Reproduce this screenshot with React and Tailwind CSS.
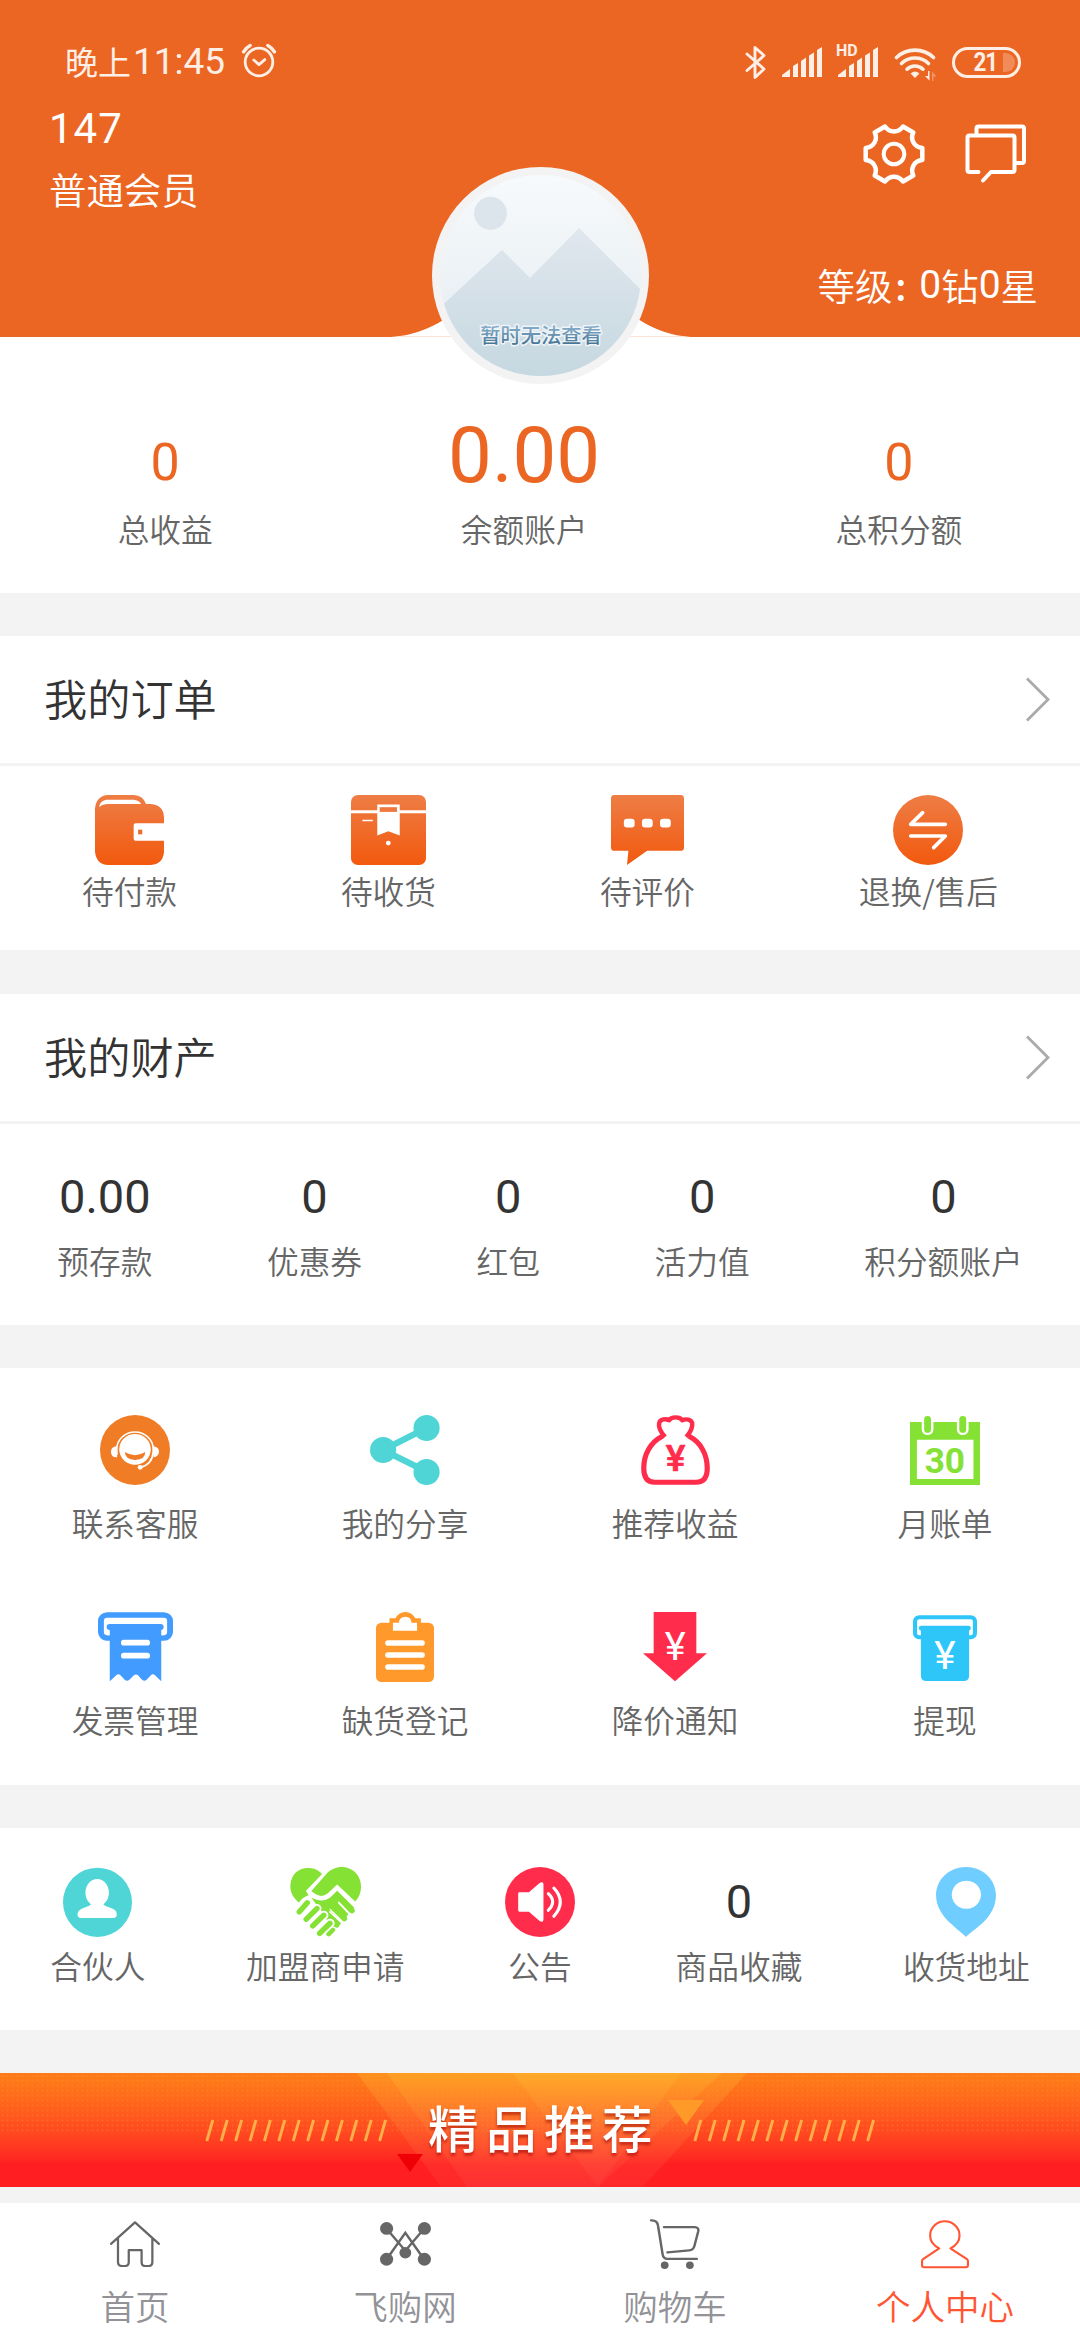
import React from "react";

const CREAM = "#fdeee6";

const Svg = ({ w, h, vb, children }) => (
  <svg width={w} height={h} viewBox={vb} preserveAspectRatio="none" fill="none" className="block shrink-0">
    {children}
  </svg>
);

// Status bar
const AlarmIcon = () => (
  <Svg w={36} h={36} vb="0 0 36 36">
    <g stroke={CREAM} strokeWidth="2.8" strokeLinecap="round" strokeLinejoin="round">
      <circle cx="18" cy="20" r="13.8" />
      <path d="M12.8 18l5.2 4.6 5.8-5" />
      <path strokeWidth="3.4" d="M2.6 9.8Q5 5.5 9.2 3.4M33.4 9.8Q31 5.5 26.8 3.4" />
    </g>
  </Svg>
);

const BluetoothIcon = () => (
  <Svg w={22} h={35} vb="0 0 22 35">
    <path
      d="M2 9l17 15-9 8.500V2.500L19 10.500 2 25.500"
      stroke={CREAM}
      strokeWidth="2.9"
      strokeLinecap="round"
      strokeLinejoin="round"
    />
  </Svg>
);

const SignalIcon = () => (
  <Svg w={41} h={30} vb="0 0 41 30">
    <g fill={CREAM}>
      <path d="M0 30v-2l8-6v8z" />
      <path d="M11 30V19l5-3v14z" />
      <path d="M19 30V14l5-3.500V30z" />
      <path d="M27 30V8.500L32 5.500V30z" />
      <path d="M35 30V3l5-3v30z" />
    </g>
  </Svg>
);

const WifiIcon = () => (
  <Svg w={43} h={34} vb="0 0 43 34">
    <g stroke={CREAM} strokeWidth="3.6" strokeLinecap="round">
      <path d="M2.500 10.500a27 27 0 0 1 37 0" />
      <path d="M7.500 16.500a19.500 19.500 0 0 1 27 0" />
      <path d="M13 22.200a11.500 11.500 0 0 1 16 0" />
    </g>
    <path d="M21 31l-4.400-4.500q4.400-3.800 8.800 0z" fill={CREAM} />
    <path d="M35.500 24v9.500l-4.500-4.500h3v-5z" fill={CREAM} />
    <path d="M38 34v-9.500l4.500 5H39.500V34z" fill={CREAM} opacity=".35" />
  </Svg>
);

const Battery = () => (
  <div className="flex h-[31px] w-[69px] items-center justify-end rounded-full border-3 border-[#fdeee6] pr-[3px]">
    <span className="mr-[6px] origin-right scale-x-90 font-[Roboto] text-[25px] leading-none font-bold tracking-[-1.5px] text-[#fdeee6]">
      21
    </span>
    <span className="h-[19px] w-[12px] rounded-r-full bg-[#f18c5a]" />
  </div>
);

// Header
const GearIcon = () => (
  <Svg w={64} h={62} vb="-32 -31 64 62">
    <g stroke="#fff" strokeWidth="4.5" strokeLinejoin="round">
      <path d="M-9-27.500C-4.500-21 4.500-21 9-27.500L19.300-21.500C15.900-14.400 20.400-6.600 28.300-5.950V5.950C20.400 6.600 15.900 14.400 19.300 21.500L9 27.500C4.500 21-4.500 21-9 27.500L-19.300 21.500C-15.900 14.400-20.400 6.600-28.300 5.950V-5.950C-20.400-6.600-15.900-14.400-19.300-21.500Z" />
      <circle r="10.3" strokeWidth="4" />
    </g>
  </Svg>
);

const ChatIcon = () => (
  <Svg w={62} h={60} vb="0 0 62 60">
    <g stroke="#fff" strokeWidth="4" strokeLinecap="round" strokeLinejoin="round">
      <path d="M13.500 48H4.500q-2 0-2-2V13.500q0-2 2-2H47.500q2 0 2 2V46q0 2-2 2H26L18 56.500" />
      <path d="M11.500 11V4.500q0-2 2-2H57q2 0 2 2V37q0 2-2 2h-6" />
    </g>
  </Svg>
);

const Avatar = () => (
  <div className="absolute top-[167px] left-[432px] size-[217px] rounded-full bg-[#f3f3f3] p-[8px]">
    <svg width="201" height="201" viewBox="440 175 201 201" className="block rounded-full">
      <defs>
        <linearGradient id="sky" x1="0" y1="0" x2="0" y2="1">
          <stop offset="0" stopColor="#f7fafc" />
          <stop offset="1" stopColor="#e2eaef" />
        </linearGradient>
        <linearGradient id="hill" x1="0" y1="0" x2="0" y2="1">
          <stop offset="0" stopColor="#e1e7ee" />
          <stop offset="1" stopColor="#c4d7e0" />
        </linearGradient>
        <linearGradient id="word" x1="0" y1="0" x2="0" y2="1">
          <stop offset=".2" stopColor="#8fb3d0" />
          <stop offset=".9" stopColor="#41708f" />
        </linearGradient>
      </defs>
      <path d="M440 175h201v201H440z" fill="url(#sky)" />
      <circle cx="490.5" cy="213.3" r="16.5" fill="#dde5ec" />
      <path d="M436 311l66-61 28 28 49-50 66 66v90H436z" fill="url(#hill)" />
      <text
        x="541"
        y="342.5"
        textAnchor="middle"
        fontSize="20.3"
        fontWeight="500"
        fontFamily="'Noto Sans CJK SC', sans-serif"
        fill="url(#word)"
        stroke="#eef4f8"
        strokeWidth="3"
        strokeLinejoin="round"
        paintOrder="stroke"
      >
        暂时无法查看
      </text>
    </svg>
  </div>
);

const Header = () => (
  <header className="relative h-[337px] bg-[#ec6623] text-white">
    <div className="flex h-24 items-center justify-between pt-7 pr-[59px] pl-[65px]">
      <div className="flex items-center">
        <span className="-mt-[3px] text-[33px] leading-9 font-normal text-[#fdeee6]">晚上</span>
        <span className="ml-[2px] font-[Roboto] text-[37px] leading-9 font-normal text-[#fdeee6]">11:45</span>
        <span className="-mt-1 ml-[16px]">
          <AlarmIcon />
        </span>
      </div>
      <div className="flex items-center">
        <BluetoothIcon />
        <span className="ml-[15px]">
          <SignalIcon />
        </span>
        <span className="relative ml-[15px]">
          <SignalIcon />
          <span className="absolute -top-[4px] -left-[2px] font-[Roboto] text-[16px] leading-none font-bold text-[#fdeee6]">
            HD
          </span>
        </span>
        <span className="mt-1 ml-[15px]">
          <WifiIcon />
        </span>
        <span className="ml-[15px]">
          <Battery />
        </span>
      </div>
    </div>
    <div className="flex justify-between">
      <div className="pt-[9px] pl-[49px]">
        <p className="font-[Roboto] text-[42px] leading-12 font-normal tracking-[1px]">147</p>
        <p className="mt-[10px] text-[37.4px] leading-[52px]">普通会员</p>
      </div>
      <div className="flex flex-col items-end">
        <div className="flex pt-[27px] pr-[53px]">
          <GearIcon />
          <span className="mt-px ml-[39px]">
            <ChatIcon />
          </span>
        </div>
        <p className="mt-[74px] mr-[42px] flex text-[37.4px] leading-[52px]">
          <span>等级</span>
          <span className="w-[27px] pl-[3px] font-medium">:</span>
          <span className="font-[Roboto] text-[39px] font-normal">0</span>
          <span>钻</span>
          <span className="font-[Roboto] text-[39px] font-normal">0</span>
          <span>星</span>
        </p>
      </div>
    </div>
    <svg width="300" height="18" viewBox="391 319 300 18" className="absolute bottom-0 left-[391px]">
      <path d="M391 337Q420 335 445 319H638Q662 335 691 337z" fill="#fff" />
      <path d="M398 336.500H684" stroke="#fde3d5" />
    </svg>
    <Avatar />
  </header>
);

// Order icons
const OrangeFade = ({ id }) => (
  <linearGradient id={id} x1="0" y1="0" x2="0" y2="1">
    <stop offset="0" stopColor="#ee7d45" />
    <stop offset="1" stopColor="#f2590e" />
  </linearGradient>
);

const WalletIcon = () => (
  <Svg w={69} h={70} vb="0 0 200 210">
    <defs>
      <OrangeFade id="wallet" />
    </defs>
    <path
      d="M0 40Q4 2 38 0H112Q140 2 148 27H162Q198 30 200 66V85H118q-6 0-6 6v40q0 6 6 6h82v35Q196 208 162 210H38Q4 208 0 170z"
      fill="url(#wallet)"
    />
    <path d="M12 37C14 20 24 14 38 14H112Q127 15 134 27H38Q22 27 12 37z" fill="#fff" />
    <path d="M125 104h12v14h-12z" fill="#ee6d2c" />
  </Svg>
);

const ParcelIcon = () => (
  <Svg w={75} h={71} vb="0 0 217 210">
    <defs>
      <OrangeFade id="parcel" />
    </defs>
    <rect width="217" height="207" rx="20" fill="url(#parcel)" />
    <path d="M0 45h217v9H0zM76 28h65v92l-33-13-32 13zM33 73h30v5H33z" fill="#fff" />
    <circle cx="108" cy="142" r="7" fill="#fff" />
    <path d="M83 36h50v14H83z" fill="#ee783d" />
  </Svg>
);

const CommentIcon = () => (
  <Svg w={73} h={71} vb="0 0 210 210">
    <defs>
      <OrangeFade id="comment" />
    </defs>
    <path
      d="M10 0H200q10 0 10 10V155q0 10-10 10H104L46 207 50 165H10q-10 0-10-10V10Q0 0 10 0z"
      fill="url(#comment)"
    />
    <g fill="#fff">
      <rect x="37" y="70" width="31" height="26" rx="9" />
      <rect x="89" y="70" width="31" height="26" rx="9" />
      <rect x="141" y="70" width="31" height="26" rx="9" />
    </g>
  </Svg>
);

const ExchangeIcon = () => (
  <Svg w={70} h={70} vb="0 0 210 210">
    <defs>
      <OrangeFade id="exchange" />
    </defs>
    <circle cx="105" cy="105" r="105" fill="url(#exchange)" />
    <path
      d="M89 53L53 88H157M53 123H157L122 158"
      stroke="#fff"
      strokeWidth="11"
      strokeLinecap="round"
      strokeLinejoin="round"
    />
  </Svg>
);

// Service icons
const SupportIcon = () => (
  <Svg w={70} h={70} vb="0 0 204 210">
    <ellipse cx="102" cy="105" rx="102" ry="105" fill="#f07c25" />
    <path d="M50 127Q32 128 32 110 33 95 48 94zM154 94Q171 95 172 110 171 124 156 127z" fill="#fff" />
    <path d="M49 120V102a53 51 0 0 1 106 0V112Q152 148 118 157" stroke="#fff" strokeWidth="5" />
    <circle cx="117" cy="157" r="7" fill="#fff" />
    <circle cx="102" cy="103" r="46" fill="#fff" />
    <path d="M72 111Q102 130 132 111 132 134 102 135 74 134 72 111z" fill="#f07c25" />
  </Svg>
);

const ShareIcon = () => (
  <Svg w={70} h={70} vb="0 0 203 210">
    <path d="M164 39L38 105 164 170" stroke="#50d5d7" strokeWidth="19" />
    <g fill="#50d5d7">
      <ellipse cx="38" cy="105" rx="38" ry="39" />
      <ellipse cx="164" cy="39" rx="38" ry="39" />
      <ellipse cx="164" cy="171" rx="38" ry="39" />
    </g>
  </Svg>
);

const MoneyBagIcon = () => (
  <Svg w={69} h={70} vb="0 0 201 210">
    <path
      d="M62 64C28 82 8 118 8 160Q8 202 40 202H160Q193 202 193 160C193 118 174 82 140 64"
      stroke="#ff2d4b"
      strokeWidth="15"
    />
    <path
      d="M70 66C60 54 50 36 53 24 56 12 72 10 82 16 88 4 114 4 120 16 132 10 146 14 149 24 151 36 142 54 132 66"
      stroke="#ff2d4b"
      strokeWidth="13"
      strokeLinejoin="round"
    />
    <text
      x="101"
      y="167"
      textAnchor="middle"
      fontSize="108"
      fontWeight="500"
      fontFamily="Roboto, sans-serif"
      fill="#ff2d4b"
      stroke="#ff2d4b"
      strokeWidth="2"
      strokeLinejoin="round"
    >
      ¥
    </text>
  </Svg>
);

const CalendarIcon = () => (
  <Svg w={70} h={69} vb="0 0 203 206">
    <path d="M0 18h203v188H0z" fill="#86e135" />
    <path d="M20 71h164v117H20z" fill="#fff" />
    <path d="M51 14v26M153 14v26" stroke="#fff" strokeWidth="34" strokeLinecap="round" />
    <path d="M33 0h36v16H33zM135 0h36v16h-36z" fill="#fff" />
    <path d="M51 10v30M153 10v30" stroke="#86e135" strokeWidth="20" strokeLinecap="round" />
    <text
      x="101"
      y="171"
      textAnchor="middle"
      fontSize="102"
      fontWeight="700"
      fontFamily="Roboto, sans-serif"
      fill="#86e135"
    >
      30
    </text>
  </Svg>
);

const InvoiceIcon = () => (
  <Svg w={75} h={70} vb="0 0 217 210">
    <rect x="8.5" y="9" width="200" height="69" rx="18" stroke="#429bff" strokeWidth="17" />
    <path d="M26 50h10v20H26zM180 50h10v20h-10z" fill="#fff" />
    <rect x="25" y="36" width="165" height="18" rx="9" fill="#429bff" />
    <path
      d="M34 45V208L53 190q6-6 12 0l13 14q6 5 12 0l14-14q6-5 12 0l12 14q6 5 12 0l13-14q6-6 12 0L183 208V45z"
      fill="#429bff"
    />
    <path d="M75 92h67M75 131h67" stroke="#fff" strokeWidth="17" strokeLinecap="round" />
  </Svg>
);

const ClipboardIcon = () => (
  <Svg w={58} h={70} vb="0 0 168 210">
    <rect y="32" width="168" height="178" rx="16" fill="#ff992b" />
    <path d="M39 40V19H56Q65 1 85 0 105 1 114 19H130V40z" fill="#ff992b" />
    <path d="M49 32H66Q68 14 85 14T103 32H119V56H49z" fill="#fff" />
    <path d="M35 93h98M35 129h98M35 165h98" stroke="#fff" strokeWidth="17" strokeLinecap="round" />
  </Svg>
);

const PriceDropIcon = () => (
  <Svg w={64} h={70} vb="0 0 186 210">
    <path d="M31 0H155V124H186L93 208 0 124H31z" fill="#ff2d4b" />
    <text
      x="94"
      y="143"
      textAnchor="middle"
      fontSize="116"
      fontWeight="400"
      fontFamily="Roboto, sans-serif"
      fill="#fff"
    >
      ¥
    </text>
  </Svg>
);

const WithdrawIcon = () => (
  <Svg w={64} h={70} vb="0 0 186 210">
    <rect x="6" y="16" width="174" height="60" rx="12" stroke="#2ec6f8" strokeWidth="12" />
    <path d="M17 55h8v14h-8zM161 55h8v14h-8z" fill="#fff" />
    <rect x="17" y="41" width="151" height="15" rx="7" fill="#2ec6f8" />
    <path d="M23 46H163V191q0 16-16 16H39q-16 0-16-16z" fill="#2ec6f8" />
    <text
      x="93"
      y="172"
      textAnchor="middle"
      fontSize="118"
      fontWeight="400"
      fontFamily="Roboto, sans-serif"
      fill="#fff"
    >
      ¥
    </text>
  </Svg>
);

// Partner row icons
const PartnerIcon = () => (
  <Svg w={69} h={70} vb="0 0 200 210">
    <ellipse cx="100" cy="106" rx="100" ry="104" fill="#50d5d7" />
    <ellipse cx="99" cy="77" rx="34" ry="41" fill="#fff" />
    <path
      d="M80 100Q86 112 76 116L54 125Q42 131 42 143 43 153 54 153H145Q156 152 156 143 156 130 144 125L122 116Q112 112 118 100z"
      fill="#fff"
    />
  </Svg>
);

const HandshakeIcon = () => (
  <Svg w={71} h={70} vb="0 0 206 209">
    <path d="M26 106C6 88 1 74 1 55 3 20 26 3 52 3 70 3 82 9 93 21L46 72 54 84Q36 90 26 106z" fill="#86e135" />
    <path
      d="M62 72L108 18C121 5 136 0 152 0 186 2 206 28 206 58 206 80 198 92 189 103L137 52 108 80Q88 96 62 72z"
      fill="#86e135"
    />
    <path d="M62 92Q94 108 116 92L137 71 186 121 140 178 118 178 96 140z" fill="#86e135" />
    <g strokeLinecap="round">
      <path d="M118 126L160 172M142 106L178 146" stroke="#fff" strokeWidth="6" />
      <path d="M116 134L150 166" stroke="#fff" strokeWidth="5" />
      <path d="M143 92L180 130M122 118L158 154" stroke="#86e135" strokeWidth="16" />
      <path d="M112 200L124 188M128 168L136 174" stroke="#86e135" strokeWidth="14" />
      <g stroke="#fff" strokeWidth="27">
        <path d="M27 134L50 107M47 156L78 124M66 176L98 144M86 198L116 168" />
      </g>
      <g stroke="#86e135" strokeWidth="16">
        <path d="M27 134L50 107M47 156L78 124M66 176L98 144M86 198L116 168" />
      </g>
    </g>
  </Svg>
);

const NoticeIcon = () => (
  <Svg w={70} h={70} vb="0 0 202 210">
    <ellipse cx="101" cy="105" rx="101" ry="105" fill="#ff2d4b" />
    <path d="M42 76H69L100 48Q111 42 111 52V158Q110 168 100 162L69 134H42q-4 0-4-4V80q0-4 4-4z" fill="#fff" />
    <path
      d="M125 80Q150 104 125 130M141 63Q178 104 141 148"
      stroke="#fff"
      strokeWidth="9"
      strokeLinecap="round"
    />
  </Svg>
);

const PinIcon = () => (
  <Svg w={60} h={70} vb="0 0 172 209">
    <path
      fillRule="evenodd"
      d="M86 209C78 200 62 188 48 174 18 148 0 118 0 83 2 34 40 0 86 0s84 34 86 83C172 118 156 148 126 174 110 188 94 200 86 209zM87 41a42 42 0 1 0 .1 0z"
      fill="#6fcdff"
    />
  </Svg>
);

// Tab bar icons
const HomeIcon = () => (
  <Svg w={50} h={46} vb="0 0 144 137">
    <path
      d="M3 68L72 4 141 68M23 52V122Q23 134 35 134H43Q54 134 54 122V87H91V122Q91 134 101 134H111Q122 134 122 122V52"
      stroke="#666"
      strokeWidth="6.5"
      strokeLinecap="round"
      strokeLinejoin="round"
    />
  </Svg>
);

const NetworkIcon = () => (
  <Svg w={51} h={44} vb="0 0 147 130">
    <path d="M19 20L73 85 127 20M19 110L73 32 127 110" stroke="#666" strokeWidth="7" />
    <g fill="#666">
      <circle cx="19" cy="19" r="19" />
      <circle cx="128" cy="19" r="19" />
      <circle cx="19" cy="110" r="19" />
      <circle cx="128" cy="110" r="19" />
      <circle cx="73" cy="91" r="17" />
    </g>
  </Svg>
);

const CartIcon = () => (
  <Svg w={50} h={50} vb="0 0 143 148">
    <path
      d="M3 4Q21 3 23 20L36 104Q38 118 50 118H134M40 24H128Q140 25 138 36L127 80Q124 92 112 93L50 99"
      stroke="#666"
      strokeWidth="7"
      strokeLinecap="round"
      strokeLinejoin="round"
    />
    <circle cx="42" cy="137" r="11" fill="#666" />
    <circle cx="114" cy="137" r="11" fill="#666" />
  </Svg>
);

const UserIcon = () => (
  <Svg w={48} h={49} vb="0 0 137 145">
    <path
      d="M52 84C36 76 26 62 26 46A42 42 0 0 1 110 46C110 62 100 76 84 84L131 116Q134 118 134 122V134Q134 140 128 140H9Q3 140 3 134V122Q3 118 6 116z"
      stroke="#ff5533"
      strokeWidth="6"
      strokeLinejoin="round"
    />
  </Svg>
);

const orders = [
  { label: "待付款", icon: <WalletIcon /> },
  { label: "待收货", icon: <ParcelIcon /> },
  { label: "待评价", icon: <CommentIcon /> },
  { label: "退换/售后", icon: <ExchangeIcon /> },
];

const assets = [
  { label: "预存款", value: "0.00" },
  { label: "优惠券", value: "0" },
  { label: "红包", value: "0" },
  { label: "活力值", value: "0" },
  { label: "积分额账户", value: "0" },
];

const services = [
  { label: "联系客服", icon: <SupportIcon /> },
  { label: "我的分享", icon: <ShareIcon /> },
  { label: "推荐收益", icon: <MoneyBagIcon /> },
  { label: "月账单", icon: <CalendarIcon /> },
  { label: "发票管理", icon: <InvoiceIcon /> },
  { label: "缺货登记", icon: <ClipboardIcon /> },
  { label: "降价通知", icon: <PriceDropIcon /> },
  { label: "提现", icon: <WithdrawIcon /> },
];

const partners = [
  { label: "合伙人", icon: <PartnerIcon /> },
  { label: "加盟商申请", icon: <HandshakeIcon /> },
  { label: "公告", icon: <NoticeIcon /> },
  {
    label: "商品收藏",
    icon: <span className="block font-[Roboto] text-[47px] leading-[70px] font-normal text-[#333]">0</span>,
  },
  { label: "收货地址", icon: <PinIcon /> },
];

const tabs = [
  { label: "首页", icon: <HomeIcon /> },
  { label: "飞购网", icon: <NetworkIcon /> },
  { label: "购物车", icon: <CartIcon /> },
  { label: "个人中心", icon: <UserIcon />, active: true },
];

const SectionTitle = ({ children }) => (
  <div className="flex h-[127px] items-center justify-between pr-[30px] pb-px pl-[44px]">
    <h2 className="-mt-[5px] text-[43.2px] leading-[60px] text-[#333]">{children}</h2>
    <Svg w={25} h={45} vb="0 0 25 45">
      <path d="M2 1.500L23 22.500 2 43.500" stroke="#aaa" strokeWidth="2.8" />
    </Svg>
  </div>
);

const Label = ({ children }) => (
  <p className="text-[31.7px] leading-10 whitespace-nowrap text-[#666]">{children}</p>
);

const Slashes = () => (
  <svg width="182" height="23" viewBox="0 0 182 23" className="relative">
    {Array.from({ length: 13 }, (_, i) => (
      <path key={i} d={`M${1.8 + i * 14.4} 22L${7.8 + i * 14.4} 1`} stroke="#ffb04a" strokeWidth="2.9" />
    ))}
  </svg>
);

const Banner = () => (
  <div className="relative flex h-[114px] items-center justify-center bg-linear-to-b from-[#ff7a18] from-5% via-[#ff501f] via-45% to-[#ff1e22] to-80%">
    <svg width="1080" height="114" viewBox="0 0 1080 114" className="absolute inset-0">
      <defs>
        <linearGradient id="glow" x1="0" y1="0" x2="0" y2="1">
          <stop offset="0" stopColor="#ffc22e" stopOpacity=".3" />
          <stop offset="1" stopColor="#ff5050" stopOpacity=".18" />
        </linearGradient>
        <pattern id="dots" width="5" height="5" patternUnits="userSpaceOnUse">
          <circle cx="2.5" cy="2.5" r=".9" fill="#ffa02a" opacity=".3" />
        </pattern>
      </defs>
      <path d="M357 0H747L643 114H441z" fill="url(#glow)" />
      <path d="M387 0H722L598 114H467z" fill="url(#glow)" />
      <path d="M513 0H681L598 114z" fill="url(#glow)" />
      <path d="M0 0h1080v60H0z" fill="url(#dots)" />
      <path d="M397 81h26l-13 18z" fill="#ee0006" />
      <path d="M668 27h36l-18 25z" fill="#ff9a28" />
    </svg>
    <Slashes />
    <span className="relative -mt-[7px] mr-[33px] ml-[41px] text-[50.5px] leading-none font-medium tracking-[7.5px] text-white [text-shadow:0_3px_3px_rgba(150,0,0,.55)]">
      精品推荐
    </span>
    <Slashes />
  </div>
);

const App = () => {
  return (
    <div className="flex h-[2340px] w-[1080px] flex-col overflow-hidden bg-[#f3f3f3] font-['Noto_Sans_CJK_SC',sans-serif] font-[350]">
      <Header />

      <section className="flex h-[256px] justify-around bg-white">
        {[
          { label: "总收益", value: "0" },
          { label: "余额账户", value: "0.00", big: true },
          { label: "总积分额", value: "0" },
        ].map((item) => (
          <div key={item.label} className="flex flex-col items-center">
            <p
              className={`h-[171px] font-[Roboto] font-normal text-[#ec6623] ${
                item.big ? "text-[78px] leading-[238px]" : "text-[52px] leading-[251px]"
              }`}
            >
              {item.value}
            </p>
            <Label>{item.label}</Label>
          </div>
        ))}
      </section>

      <section className="mt-[43px] h-[314px] bg-white">
        <SectionTitle>我的订单</SectionTitle>
        <div className="flex justify-around border-t-3 border-[#f3f3f3] pt-[29px]">
          {orders.map((item) => (
            <div key={item.label} className="flex flex-col items-center">
              <div className="mb-[5px] flex h-[70px] items-start">{item.icon}</div>
              <Label>{item.label}</Label>
            </div>
          ))}
        </div>
      </section>

      <section className="mt-[44px] h-[331px] bg-white">
        <SectionTitle>我的财产</SectionTitle>
        <div className="flex justify-around border-t-3 border-[#f3f3f3] pt-[43px]">
          {assets.map((item) => (
            <div key={item.label} className="flex flex-col items-center">
              <p className="mb-[13px] font-[Roboto] text-[47px] leading-[60px] font-normal text-[#333]">{item.value}</p>
              <Label>{item.label}</Label>
            </div>
          ))}
        </div>
      </section>

      <section className="mt-[43px] grid h-[417px] grid-cols-4 content-start gap-y-[70px] bg-white pt-[47px]">
        {services.map((item) => (
          <div key={item.label} className="flex flex-col items-center">
            <div className="mb-[17px] flex h-[70px] items-end">{item.icon}</div>
            <Label>{item.label}</Label>
          </div>
        ))}
      </section>

      <section className="mt-[43px] flex h-[202px] justify-around bg-white pt-[39px]">
        {partners.map((item) => (
          <div key={item.label} className="flex flex-col items-center">
            <div className="mb-[8px] h-[70px]">{item.icon}</div>
            <Label>{item.label}</Label>
          </div>
        ))}
      </section>

      <div className="mt-[43px]">
        <Banner />
      </div>

      <nav className="mt-[16px] grid h-[137px] grid-cols-4 bg-white">
        {tabs.map((tab) => (
          <div key={tab.label} className="flex flex-col items-center pt-[15px]">
            <div className="flex h-[52px] items-center">{tab.icon}</div>
            <p
              className={`mt-[11px] text-[34.5px] leading-[48px] whitespace-nowrap ${
                tab.active ? "text-[#ff5533]" : "text-[#929297]"
              }`}
            >
              {tab.label}
            </p>
          </div>
        ))}
      </nav>
    </div>
  );
};

export default App;
